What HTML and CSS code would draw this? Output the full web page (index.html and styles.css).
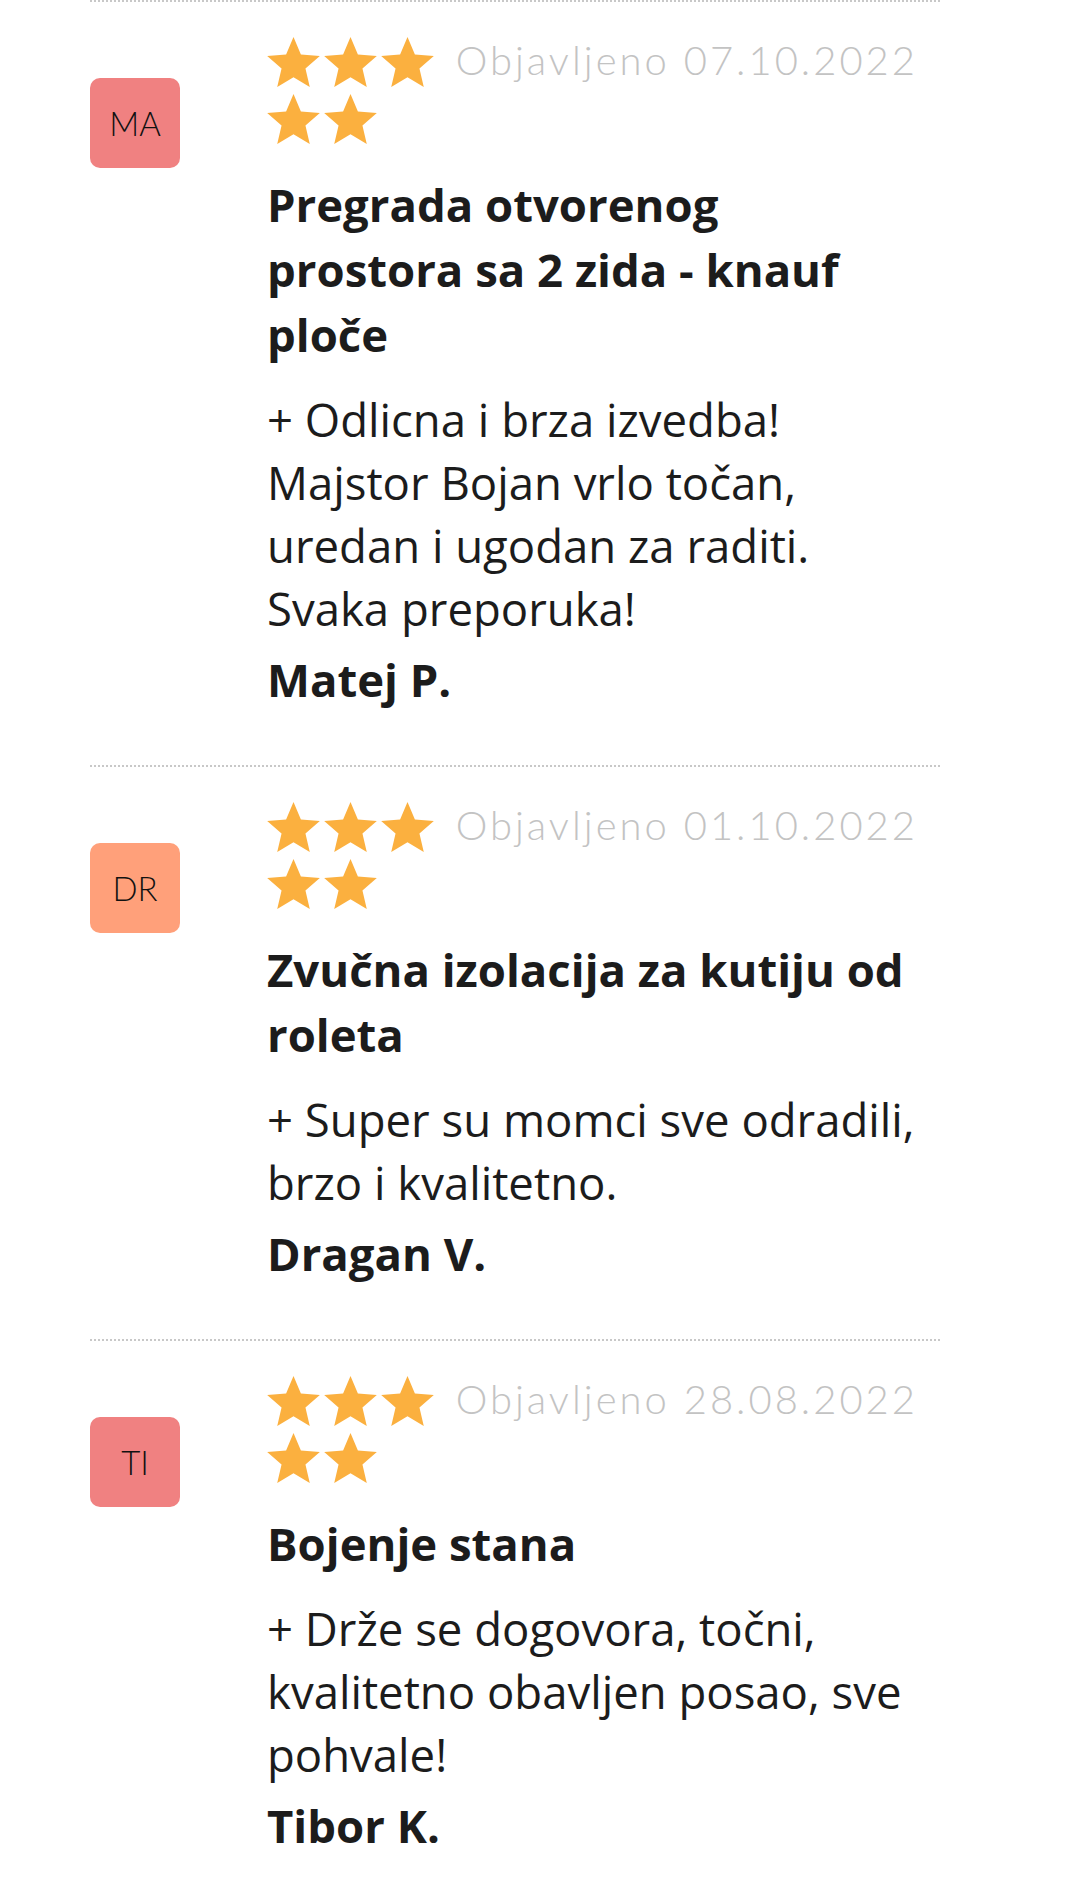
FILE: index.html
```html
<!DOCTYPE html>
<html lang="hr">
<head>
<meta charset="utf-8">
<title>Recenzije</title>
<link rel="stylesheet" href="styles.css">
</head>
<body>
<svg width="0" height="0" class="defs" aria-hidden="true">
  <defs>
    <symbol id="star" viewBox="2 2 20 19">
      <path d="M12 17.27L18.18 21l-1.64-7.03L22 9.24l-7.19-.61L12 2 9.19 8.63 2 9.24l5.46 4.73L5.82 21z"/>
    </symbol>
  </defs>
</svg>
<div class="reviews">
  <div class="review">
    <div class="avatar avatar-coral">MA</div>
    <div class="content">
      <div class="meta">
        <div class="stars">
          <svg class="star"><use href="#star"/></svg><svg class="star"><use href="#star"/></svg><svg class="star"><use href="#star"/></svg><svg class="star"><use href="#star"/></svg><svg class="star"><use href="#star"/></svg>
        </div>
        <div class="date">Objavljeno 07.10.2022</div>
      </div>
      <h3 class="title">Pregrada otvorenog prostora sa 2 zida - knauf ploče</h3>
      <p class="text">+ Odlicna i brza izvedba! Majstor Bojan vrlo točan, uredan i ugodan za raditi. Svaka preporuka!</p>
      <p class="author">Matej P.</p>
    </div>
  </div>
  <div class="review">
    <div class="avatar avatar-salmon">DR</div>
    <div class="content">
      <div class="meta">
        <div class="stars">
          <svg class="star"><use href="#star"/></svg><svg class="star"><use href="#star"/></svg><svg class="star"><use href="#star"/></svg><svg class="star"><use href="#star"/></svg><svg class="star"><use href="#star"/></svg>
        </div>
        <div class="date">Objavljeno 01.10.2022</div>
      </div>
      <h3 class="title">Zvučna izolacija za kutiju od roleta</h3>
      <p class="text">+ Super su momci sve odradili, brzo i kvalitetno.</p>
      <p class="author">Dragan V.</p>
    </div>
  </div>
  <div class="review">
    <div class="avatar avatar-coral">TI</div>
    <div class="content">
      <div class="meta">
        <div class="stars">
          <svg class="star"><use href="#star"/></svg><svg class="star"><use href="#star"/></svg><svg class="star"><use href="#star"/></svg><svg class="star"><use href="#star"/></svg><svg class="star"><use href="#star"/></svg>
        </div>
        <div class="date">Objavljeno 28.08.2022</div>
      </div>
      <h3 class="title">Bojenje stana</h3>
      <p class="text">+ Drže se dogovora, točni, kvalitetno obavljen posao, sve pohvale!</p>
      <p class="author">Tibor K.</p>
    </div>
  </div>
</div>
</body>
</html>
```
FILE: styles.css
```css
html, body {
  margin: 0;
  padding: 0;
  background: #ffffff;
}

body {
  font-family: "Open Sans", "Liberation Sans", sans-serif;
  color: #1c1c1c;
}

.defs {
  position: absolute;
  width: 0;
  height: 0;
  overflow: hidden;
}

.reviews {
  margin-left: 90px;
  width: 850px;
}

.review {
  display: flex;
  border-top: 2px dotted #c8c8c8;
  padding: 31px 0 54px;
}

.avatar {
  flex: none;
  width: 90px;
  height: 90px;
  margin-top: 45px;
  border-radius: 10px;
  display: flex;
  align-items: center;
  justify-content: center;
  font-family: "Lato", "Noto Sans", sans-serif;
  font-weight: 300;
  font-size: 33px;
  color: #111111;
}

.avatar-coral {
  background: #f08181;
}

.avatar-salmon {
  background: #ffa07a;
}

.content {
  margin-left: 87px;
  width: 653px;
}

.meta {
  display: flex;
  justify-content: space-between;
  align-items: flex-start;
}

.stars {
  width: 170px;
  display: flex;
  flex-wrap: wrap;
  column-gap: 4px;
  row-gap: 7px;
  padding-top: 4px;
}

.star {
  width: 53px;
  height: 50px;
  fill: #fbb03f;
}

.date {
  white-space: nowrap;
  font-family: "Lato", "Noto Sans", sans-serif;
  font-weight: 300;
  font-size: 40px;
  letter-spacing: 3px;
  line-height: 54px;
  color: #c3c3c3;
  margin-right: 2px;
}

.title {
  margin: 28px 0 0;
  font-size: 45.5px;
  line-height: 65px;
  font-weight: 700;
}

.text {
  margin: 21px 0 0;
  font-size: 45.5px;
  line-height: 63px;
  font-weight: 400;
}

.author {
  margin: 8px 0 0;
  font-size: 45.5px;
  line-height: 63px;
  font-weight: 700;
}
```
